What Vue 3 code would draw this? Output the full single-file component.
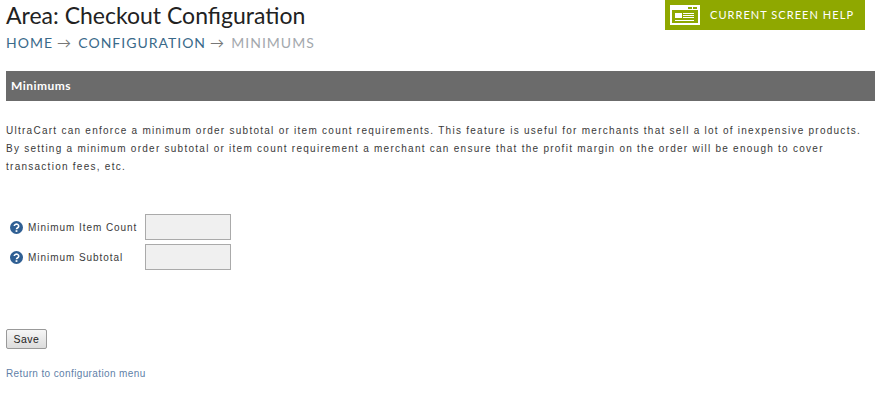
<template>
  <div class="page">
    <div class="header">
      <div>
        <h1 class="title">Area: Checkout Configuration</h1>
        <div class="crumbs">
          <a class="crumb">Home</a><span class="arrow">→</span>
          <a class="crumb">Configuration</a><span class="arrow">→</span>
          <span class="current">Minimums</span>
        </div>
      </div>
      <a class="help">
        <svg class="help-icon" width="30" height="20" viewBox="0 0 30 20">
          <rect width="30" height="20" fill="#fff" />
          <rect x="2" y="5" width="26" height="13" fill="#8fa800" />
          <rect x="18" y="2" width="4" height="2" fill="#8fa800" />
          <rect x="23" y="2" width="4" height="2" fill="#8fa800" />
          <rect x="5" y="8" width="7" height="5" fill="#fff" />
          <rect x="13" y="8" width="11" height="1" fill="#fff" />
          <rect x="13" y="10" width="11" height="1" fill="#fff" />
          <rect x="13" y="12" width="11" height="1" fill="#fff" />
          <rect x="5" y="15" width="19" height="1" fill="#fff" />
        </svg>
        <span class="help-text">CURRENT SCREEN HELP</span>
      </a>
    </div>

    <div class="bar">Minimums</div>

    <p class="intro">
      UltraCart can enforce a minimum order subtotal or item count requirements. This feature is useful for merchants that sell a lot of inexpensive products.<br />
      By setting a minimum order subtotal or item count requirement a merchant can ensure that the profit margin on the order will be enough to cover<br />
      transaction fees, etc.
    </p>

    <div class="form">
      <div v-for="field in fields" :key="field" class="row">
        <svg class="q" width="13" height="13" viewBox="0 0 13 13">
          <circle cx="6.5" cy="6.5" r="6.5" fill="#2f5f93" />
          <path d="M4.3 5.1a2.2 2 0 1 1 3.4 1.7c-.8.5-1.2.8-1.2 1.5" fill="none" stroke="#fff" stroke-width="1.6" />
          <rect x="5.6" y="9.2" width="1.8" height="1.7" fill="#fff" />
        </svg>
        <label class="label">{{ field }}</label>
        <input class="box" type="text" />
      </div>
    </div>

    <button class="save">Save</button>
    <a class="back">Return to configuration menu</a>
  </div>
</template>

<script setup>
const fields = ['Minimum Item Count', 'Minimum Subtotal'];
</script>

<style>
html, body {
  background: #fff;
}
</style>

<style scoped>
.page {
  padding: 0 4px 0 6px;
  font-family: "Liberation Sans", Arial, sans-serif;
  font-size: 10px;
  color: #3a3a3a;
}

.header {
  display: flex;
  justify-content: space-between;
  height: 71px;
}

.title {
  margin: 1px 0 0;
  font-family: Lato, sans-serif;
  font-size: 23px;
  font-weight: 400;
  line-height: 28px;
  color: #222;
}

.crumbs {
  margin-top: 4px;
  font-family: Lato, sans-serif;
  font-size: 14px;
  line-height: 20px;
  letter-spacing: 1px;
  text-transform: uppercase;
  white-space: nowrap;
}

.crumb {
  color: #3a6a8a;
}

.arrow {
  margin: 0 6.3px 0 4px;
  color: #777;
}

.current {
  color: #a3a8ad;
}

.help {
  display: flex;
  align-items: center;
  gap: 10px;
  box-sizing: border-box;
  width: 200px;
  height: 30px;
  margin-right: 10px;
  padding-left: 5px;
  background: #8fa800;
  color: #fff;
  font-family: Lato, sans-serif;
  font-size: 11px;
  font-weight: 400;
  letter-spacing: 1.05px;
  white-space: nowrap;
}

.help-text {
  margin-bottom: 2px;
}

.bar {
  box-sizing: border-box;
  height: 30px;
  padding-left: 5px;
  background: #6b6b6b;
  color: #fff;
  font-family: Lato, sans-serif;
  font-size: 12px;
  font-weight: 700;
  line-height: 29px;
  letter-spacing: 0.45px;
}

.intro {
  margin: 21px 0 0;
  font-size: 10px;
  line-height: 18px;
  letter-spacing: 1.26px;
  white-space: nowrap;
}

.form {
  display: flex;
  flex-direction: column;
  gap: 4px;
  margin-top: 38px;
}

.row {
  display: flex;
  align-items: center;
}

.q {
  margin-left: 4px;
}

.label {
  width: 117px;
  margin-left: 5px;
  letter-spacing: 0.95px;
}

.box {
  box-sizing: border-box;
  width: 86px;
  height: 26px;
  border: 1px solid #aaa;
  background: #f0f0f0;
}

.save {
  display: block;
  box-sizing: border-box;
  width: 41px;
  height: 20px;
  margin-top: 59px;
  padding: 0;
  border: 1px solid #999;
  border-radius: 2px;
  background: linear-gradient(#f6f6f6, #dcdcdc);
  color: #222;
  font-family: "Liberation Sans", Arial, sans-serif;
  font-size: 10.5px;
  letter-spacing: 0.5px;
}

.back {
  display: block;
  margin-top: 18px;
  color: #5f7fa8;
  line-height: 14px;
  letter-spacing: 0.38px;
}
</style>
